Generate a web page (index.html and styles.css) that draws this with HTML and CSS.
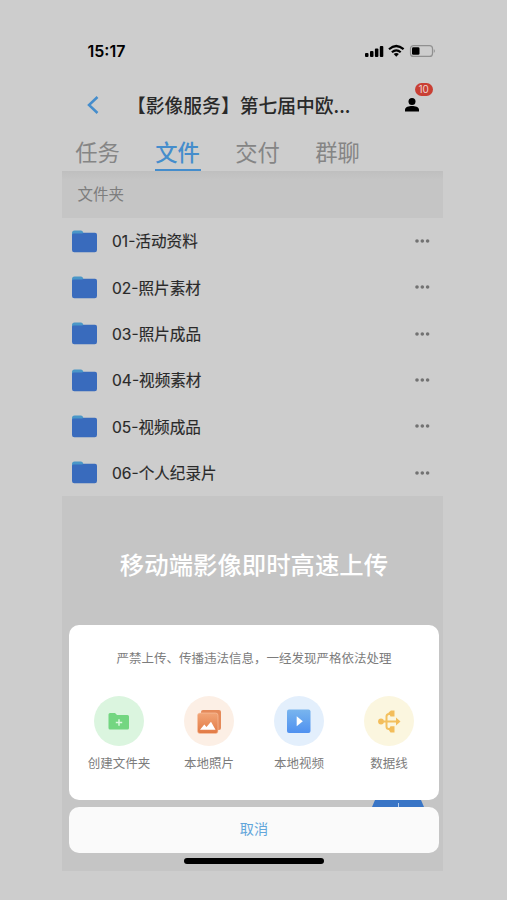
FILE: index.html
```
<!DOCTYPE html>
<html lang="zh-CN">
<head>
<meta charset="utf-8">
<title>文件</title>
<link rel="stylesheet" href="styles.css">
</head>
<body>
<svg class="defs" width="0" height="0" aria-hidden="true">
  <defs>
    <symbol id="folder" viewBox="0 0 25 23"><path fill="#4a97c8" d="M0 3Q0 .5 2.5.5H9Q10.500.5 11 2L12 3.500V8H0Z"/><path fill="#396bbd" d="M0 5Q0 3.500 1.500 3.500H10L12 2.700H23Q25 2.700 25 4.700V20Q25 22.300 22.700 22.300H2.300Q0 22.300 0 20Z"/></symbol>
    <symbol id="more" viewBox="0 0 15 4"><g fill="#727272"><circle cx="2" cy="2" r="1.800"/><circle cx="7.300" cy="2" r="1.800"/><circle cx="12.600" cy="2" r="1.800"/></g></symbol>
    <linearGradient id="orange" x1="0" y1="0" x2="0" y2="1"><stop stop-color="#f2a577"/><stop offset="1" stop-color="#e27a45"/></linearGradient>
    <linearGradient id="blue" x1="0" y1="0" x2="0" y2="1"><stop stop-color="#79b5ee"/><stop offset="1" stop-color="#4f91f0"/></linearGradient>
  </defs>
</svg>
<main class="phone">
  <header class="status">
    <span class="time">15:17</span>
    <svg class="signals" viewBox="0 0 72 14" width="72" height="14">
      <rect x="1" y="9" width="3.500" height="4" rx="1"/><rect x="6" y="7" width="3.500" height="6" rx="1"/><rect x="10.900" y="4.500" width="3.500" height="8.500" rx="1"/><rect x="15.800" y="2" width="3.500" height="11" rx="1"/>
      <g fill="none" stroke="#000" stroke-width="2.200"><path d="M25 5.200Q32.200-1.200 39.600 5.200"/><path d="M27.900 8.300Q32.300 4.300 36.700 8.300"/></g><path d="M29.700 10.100Q32.300 8 34.900 10.100L32.300 12.800Z"/>
      <rect x="46.500" y="1.600" width="22" height="10.800" rx="3" fill="none" stroke="#909090" stroke-width="1.200"/><path d="M69.800 5Q72 7 69.800 9Z" fill="#909090"/><rect x="48" y="3.200" width="7.500" height="7.600" rx="1.300"/>
    </svg>
  </header>
  <nav class="titlebar">
    <svg class="back" viewBox="0 0 12 18" width="12" height="18"><path d="M10.500 1L2 9L10.500 17" fill="none" stroke="#458dcc" stroke-width="2.500"/></svg>
    <h1>【影像服务】第七届中欧...</h1>
    <div class="user">
      <svg viewBox="0 0 14 14" width="14" height="14"><circle cx="7" cy="3.500" r="3.500"/><path d="M0 13.500V11.500C0 9 4 8 7 8S14 9 14 11.500V13.500Z"/></svg>
      <span class="badge">10</span>
    </div>
  </nav>
  <div class="tabs"><span>任务</span><span class="active">文件</span><span>交付</span><span>群聊</span></div>
  <div class="section">文件夹</div>
  <ul class="files">
    <li><svg class="folder"><use href="#folder"/></svg><span>01-活动资料</span><svg class="more"><use href="#more"/></svg></li>
    <li><svg class="folder"><use href="#folder"/></svg><span>02-照片素材</span><svg class="more"><use href="#more"/></svg></li>
    <li><svg class="folder"><use href="#folder"/></svg><span>03-照片成品</span><svg class="more"><use href="#more"/></svg></li>
    <li><svg class="folder"><use href="#folder"/></svg><span>04-视频素材</span><svg class="more"><use href="#more"/></svg></li>
    <li><svg class="folder"><use href="#folder"/></svg><span>05-视频成品</span><svg class="more"><use href="#more"/></svg></li>
    <li><svg class="folder"><use href="#folder"/></svg><span>06-个人纪录片</span><svg class="more"><use href="#more"/></svg></li>
  </ul>
  <section class="lower">
    <p class="slogan">移动端影像即时高速上传</p>
    <div class="sheet">
      <p class="notice">严禁上传、传播违法信息，一经发现严格依法处理</p>
      <div class="actions">
        <div class="action"><div class="disc green"><svg viewBox="0 0 50 50"><path fill="#73d681" d="M14.500 18.500Q14.500 17 16 17H21L23 19H33.500Q35 19 35 20.500V32Q35 33.500 33.500 33.500H16Q14.500 33.500 14.500 32Z"/><path d="M25 23.300V29.700M21.800 26.500H28.200" stroke="#dcf8df" stroke-width="1.500"/></svg></div><span>创建文件夹</span></div>
        <div class="action"><div class="disc peach"><svg viewBox="0 0 50 50"><rect x="17" y="14" width="20" height="20" rx="2" fill="#e58a5a"/><rect x="13.500" y="17" width="20.500" height="20.500" rx="2.500" fill="url(#orange)" stroke="#f8c5a5" stroke-width=".6"/><path fill="#fff" d="M16 33.700L20.300 28.500L22.500 31L27 25.800L31.500 33.700Z"/></svg></div><span>本地照片</span></div>
        <div class="action"><div class="disc sky"><svg viewBox="0 0 50 50"><rect x="13" y="13.500" width="23.500" height="23.500" rx="2" fill="url(#blue)"/><path fill="#fff" d="M22.700 20.300L28.800 25.300L22.700 30.300Z"/></svg></div><span>本地视频</span></div>
        <div class="action"><div class="disc cream"><svg viewBox="0 0 50 50"><g fill="none" stroke="#f3c05e" stroke-width="2"><path d="M17 25.500H33M22.500 25V20.500Q22.500 18 25 18H26M22.500 25V30.500Q22.500 33 25 33H26"/></g><g fill="#f3bd5a"><circle cx="17" cy="25.500" r="2.900"/><path d="M32 21.500L36.500 25.500L32 29.500Z"/><path d="M24.500 16.500L27 14.500H30.500V20.500H26.500Z"/><path d="M24.500 33.500L26.500 30.300H30.500V36.500H26.500Z"/></g></svg></div><span>数据线</span></div>
      </div>
    </div>
    <div class="gap"><div class="fab"><i></i></div></div>
    <div class="cancel">取消</div>
    <div class="home"></div>
  </section>
</main>
</body>
</html>
```
FILE: styles.css
```
* { box-sizing: border-box; }
body {
  margin: 0;
  height: 900px;
  overflow: hidden;
  background: #cdcdcd;
  color: #292929;
  font-family: Inter, "Noto Sans CJK SC", sans-serif;
}
svg { display: block; flex: none; }
.defs { position: absolute; }
h1, p, ul { margin: 0; padding: 0; font-weight: 400; }
.phone { width: 381px; margin-left: 61.5px; padding-top: 31px; }
.status {
  height: 40px;
  display: flex;
  align-items: center;
  justify-content: space-between;
  padding: 0 7px 0 26px;
}
.time { color: #000; font-size: 16px; font-weight: 600; }
.titlebar { height: 68px; display: flex; align-items: center; padding-left: 25px; }
.titlebar h1 {
  width: 234px;
  margin-left: 28.5px;
  white-space: nowrap;
  font: 500 18.8px/28px "Noto Sans CJK SC", sans-serif;
}
.user { position: relative; margin-left: 44px; }
.badge {
  position: absolute;
  left: 9.500px;
  top: -15px;
  width: 18.500px;
  height: 12.500px;
  border-radius: 7px;
  background: #c93f34;
  color: #eed4d0;
  font-size: 10px;
  line-height: 12.500px;
  text-align: center;
}
.tabs { height: 32px; display: flex; gap: 34px; padding-left: 13px; }
.tabs span {
  width: 46px;
  height: 32px;
  text-align: center;
  white-space: nowrap;
  color: #858585;
  font-size: 22.3px;
  line-height: 27px;
}
.tabs .active { color: #458dcc; border-bottom: 2.500px solid #458dcc; font-weight: 500; }
.section {
  height: 47px;
  padding-left: 16px;
  background: linear-gradient(#bfbfbf, #c5c5c5 9px);
  color: #7d7d7d;
  font-size: 15.5px;
  line-height: 47px;
}
.files { list-style: none; height: 278px; display: grid; grid-template-rows: repeat(6, 1fr); }
.files li { display: flex; align-items: center; padding: 0 13px 0 10.500px; }
.files span { flex: 1; margin-left: 15px; font-size: 15.6px; line-height: 22px; padding-top: 2.500px; -webkit-text-stroke: .15px; }
.folder { width: 25px; height: 23px; }
.more { width: 15px; height: 4px; }
.lower {
  height: 375px;
  padding: 50px 3.500px 0 7.500px;
  background: #c5c5c5;
}
.slogan {
  height: 79px;
  text-align: center;
  color: #fff;
  font-size: 24.4px;
  line-height: 38px;
  font-weight: 500;
}
.sheet { height: 175px; border-radius: 10px; background: #fff; padding-top: 24px; color: #7c7c7c; font-size: 12.5px; }
.notice { text-align: center; line-height: 20px; }
.actions { display: grid; grid-template-columns: repeat(4, 90px); justify-content: center; margin-top: 27px; }
.action { display: flex; flex-direction: column; align-items: center; }
.action span { margin-top: 9px; line-height: 18px; }
.disc { width: 50px; height: 50px; border-radius: 50%; }
.green { background: #dbf5df; }
.peach { background: #fcefe5; }
.sky { background: #e3effc; }
.cream { background: #fbf6df; }
.gap { height: 7px; display: flex; justify-content: flex-end; padding-right: 15px; }
.fab { width: 52px; height: 7px; background: #3975c6; clip-path: polygon(3px 0, 49px 0, 52px 100%, 0 100%); display: flex; justify-content: center; }
.fab i { width: 1px; height: 4px; margin-top: 3px; background: #bcd2ee; }
.cancel {
  height: 46px;
  border-radius: 10px;
  background: #fafafa;
  color: #62a6da;
  text-align: center;
  font-size: 14.200px;
  line-height: 43px;
}
.home { width: 140px; height: 6.500px; margin: 4.500px auto 0; border-radius: 4px; background: #000; }
```
